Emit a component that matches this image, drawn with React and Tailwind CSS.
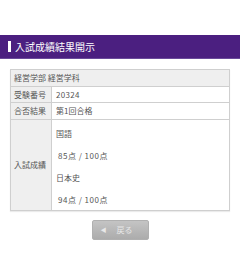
export default function App() {
  return (
    <div className="h-[260px] w-[240px] bg-white pt-[35px] font-['Noto_Sans_CJK_JP',sans-serif] text-[#555]">
      <h1 className="flex h-[24px] items-center border-b border-[#6a4a9a] bg-[#4b1f80] pl-[8px] text-[10px] leading-none text-white">
        <span className="mr-[4px] h-[11px] w-[3px] bg-white" />
        入試成績結果開示
      </h1>

      <div className="mx-[10px] mt-[10px] border border-[#cfcfcf] text-[8px] leading-none shadow-[0_1px_1px_rgba(0,0,0,0.08)]">
        <div className="flex h-[16px] items-center bg-[#efefef] pl-[3px]">経営学部 経営学科</div>
        <div className="flex h-[16px] border-t border-[#cfcfcf]">
          <div className="flex w-[41px] items-center border-r border-[#cfcfcf] bg-[#efefef] pl-[3px]">受験番号</div>
          <div className="flex items-center pl-[4px] tracking-[0.3px]">20324</div>
        </div>
        <div className="flex h-[17px] border-t border-[#cfcfcf]">
          <div className="flex w-[41px] items-center border-r border-[#cfcfcf] bg-[#efefef] pl-[3px]">合否結果</div>
          <div className="flex items-center pl-[4px]">第1回合格</div>
        </div>
        <div className="flex h-[91px] border-t border-[#cfcfcf]">
          <div className="flex w-[41px] items-center border-r border-[#cfcfcf] bg-[#efefef] pl-[3px]">入試成績</div>
          <div className="flex flex-col gap-[14px] pl-[4px] pt-[10px]">
            <p>国語</p>
            <p className="pl-[2px] tracking-[0.5px]">85点 / 100点</p>
            <p>日本史</p>
            <p className="pl-[2px] tracking-[0.5px]">94点 / 100点</p>
          </div>
        </div>
      </div>

      <div className="mt-[9px] flex justify-center">
        <button
          type="button"
          className="flex h-[20px] w-[57px] items-center rounded-[2px] border border-[#b0b0b0] bg-gradient-to-b from-[#c4c4c4] to-[#acacac] pl-[8px] text-[8px] leading-none text-[#e8e8e8]"
        >
          <span className="text-[6px]">◀</span>
          <span className="ml-[10px]">戻る</span>
        </button>
      </div>
    </div>
  );
}
